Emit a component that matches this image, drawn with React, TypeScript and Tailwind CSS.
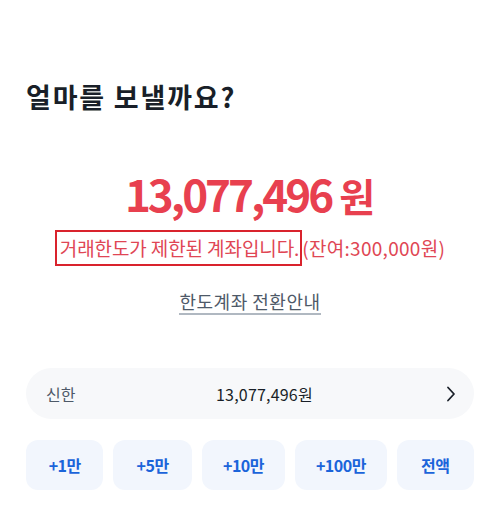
import React from 'react';

const FONT = '"Noto Sans CJK KR", "Noto Sans", sans-serif';

const quickAmounts = ['+1만', '+5만', '+10만', '+100만', '전액'];

const App: React.FC = () => {
  return (
    <div className="w-[500px] h-[515px] bg-white overflow-hidden px-[26px]" style={{ fontFamily: FONT }}>
      <h1 className="pt-[77px] text-[27px] leading-[40px] font-bold text-[#191f28] tracking-[1.8px]">
        얼마를 보낼까요?
      </h1>

      <div className="mt-[52px] flex flex-col items-center">
        <div className="flex items-baseline text-[#e8404f] font-bold leading-[48px]">
          <span className="text-[44px] tracking-[-3px]">13,077,496</span>
          <span className="text-[39px] ml-[8px]">원</span>
        </div>
        <div className="mt-[11px] flex items-center text-[19px] leading-[28px] text-[#e04654] tracking-[-0.1px]">
          <span className="border-2 border-[#d9232d] pl-[3px] pr-[1px] py-[2px]">거래한도가 제한된 계좌입니다.</span>
          <span className="tracking-[0.3px]">(잔여:300,000원)</span>
        </div>
        <button className="mt-[23px] text-[18px] leading-[24px] text-[#4e5968] border-b-2 border-[#b0b8c1] tracking-[0.5px]">
          한도계좌 전환안내
        </button>
      </div>

      <div className="mt-[53px] h-[51px] rounded-[26px] bg-[#f7f8fa] flex items-center pl-[20px] pr-[18px]">
        <span className="w-[170px] text-[16px] text-[#4e5968]">신한</span>
        <span className="text-[16px] text-[#191f28] tracking-[0.2px]">13,077,496원</span>
        <span className="flex-1" />
        <svg width="10" height="16" viewBox="0 0 10 16" fill="none">
          <path d="M2 1.5 L8 8 L2 14.5" stroke="#191f28" strokeWidth="1.8" strokeLinecap="round" strokeLinejoin="round" />
        </svg>
      </div>

      <div className="mt-[21px] grid grid-cols-[77fr_78fr_83fr_91fr_77fr] gap-[10px]">
        {quickAmounts.map((label) => (
          <button
            key={label}
            className="h-[50px] rounded-[12px] bg-[#f2f6fd] text-[#1b64da] text-[16px] font-semibold tracking-[-0.5px]"
          >
            {label}
          </button>
        ))}
      </div>
    </div>
  );
};

export default App;
